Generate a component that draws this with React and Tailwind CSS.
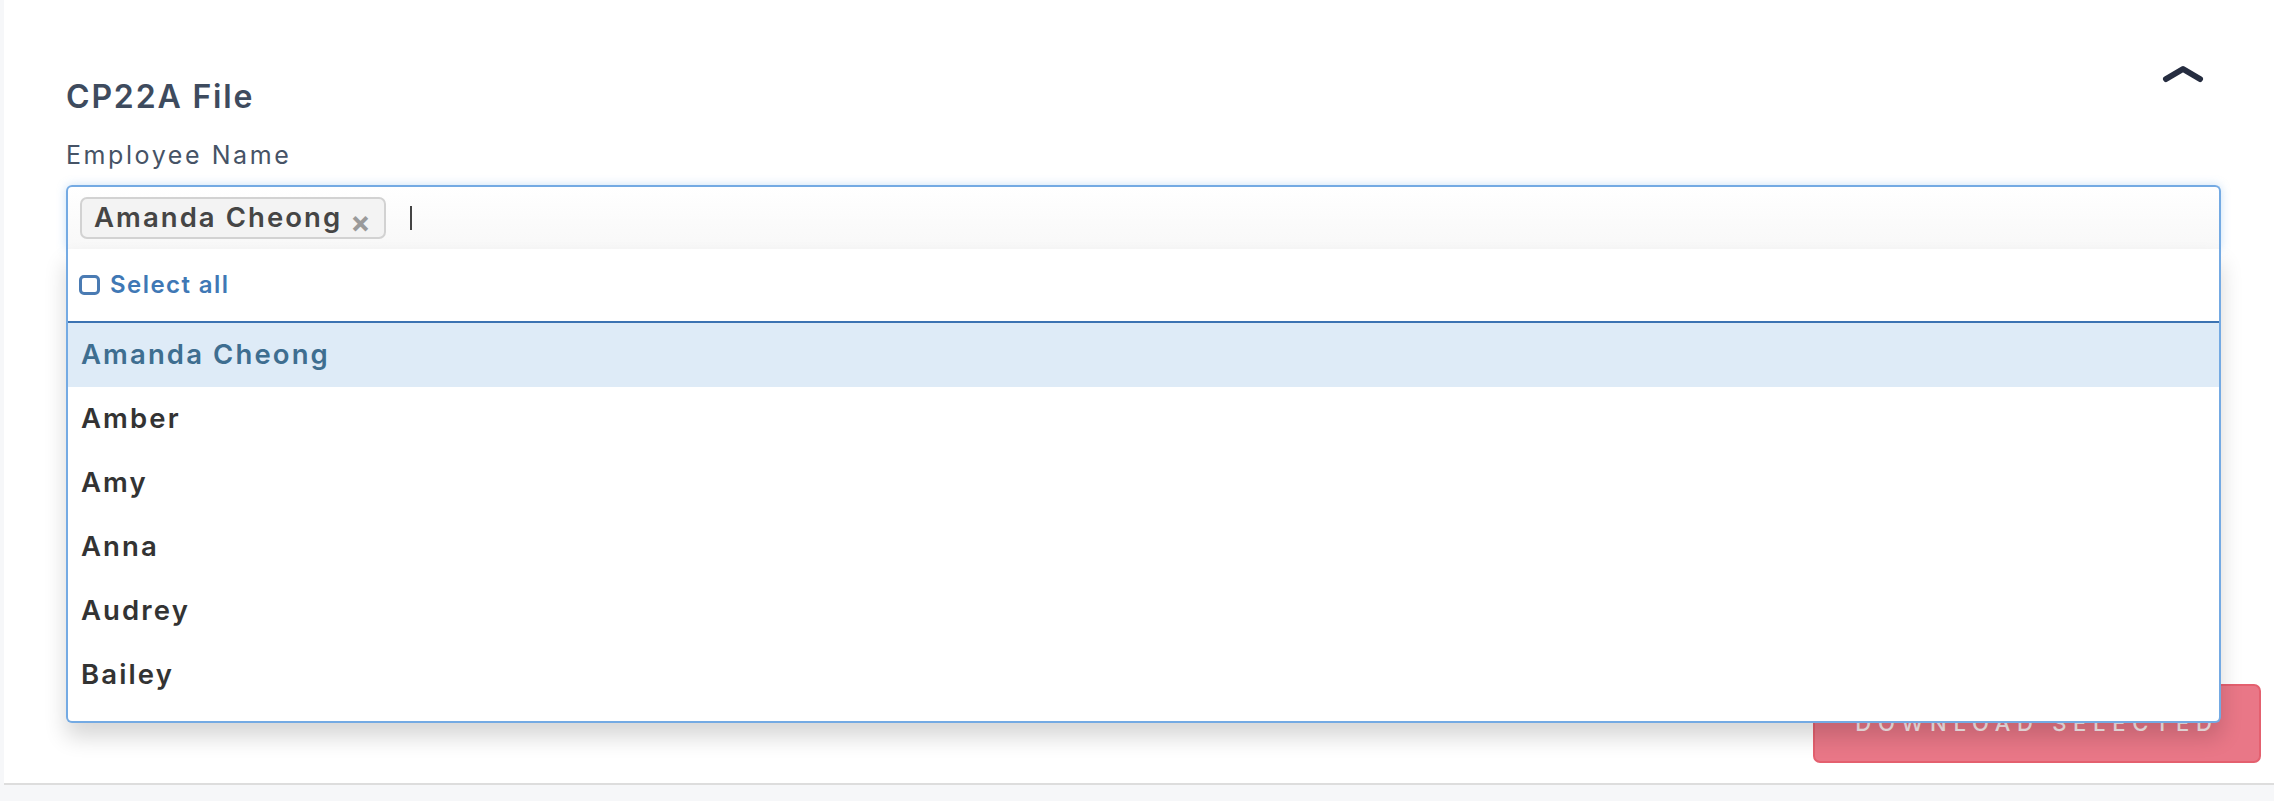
import { useState } from "react";

const employees = ["Amanda Cheong", "Amber", "Amy", "Anna", "Audrey", "Bailey"];

export default function App() {
  const [selected] = useState(["Amanda Cheong"]);

  return (
    <div className="min-h-screen bg-[#f6f7f9] pl-[4px] font-['Inter',sans-serif]">
      <div className="bg-white border-b-2 border-[#dddddd] pb-[20px]">
        {/* Header */}
        <div className="pl-[62px] pr-[53px] pt-[60px]">
          <div className="flex justify-between items-start">
            <h2 className="mt-[18px] text-[32px] leading-[38px] font-semibold text-[#3e4b5e] tracking-[0.057em]">
              CP22A File
            </h2>
            <button className="mt-[2px] mr-[15px] text-[#262d40]">
              <svg width="46" height="24" viewBox="0 0 46 24" fill="none">
                <polyline
                  points="6,17 23,7 40,17"
                  stroke="currentColor"
                  strokeWidth="6"
                  strokeLinecap="round"
                  strokeLinejoin="round"
                />
              </svg>
            </button>
          </div>

          <label className="block mt-[23.5px] text-[25px] leading-[30px] text-[#465366] tracking-[0.103em]">
            Employee Name
          </label>

          {/* Multi select */}
          <div className="relative mt-[15.5px]">
            <div className="h-[64px] border-2 border-b-0 border-[#74aae3] rounded-t-[6px] bg-gradient-to-b from-white to-[#f8f8f8] shadow-[0_0_10px_rgba(102,170,233,0.35)] flex items-center pl-[12px] gap-[24px]">
              {selected.map((name) => (
                <span
                  key={name}
                  className="h-[42px] flex items-center gap-[8px] pl-[12px] pr-[13px] bg-[#f3f3f3] border-2 border-[#d2d2d2] rounded-[7px] text-[27.5px] font-semibold text-[#454545] tracking-[0.075em]"
                >
                  {name}
                  <span className="mt-[8px] text-[30px] leading-none font-bold text-[#9a9a9a] tracking-normal">×</span>
                </span>
              ))}
              <span className="w-[2px] h-[24px] bg-[#444]" />
            </div>

            <div className="absolute top-full left-0 right-0 z-10 bg-white border-2 border-t-0 border-[#74aae3] rounded-b-[6px] shadow-[0_14px_22px_rgba(0,0,0,0.16)] pb-[14px]">
              <div className="h-[74px] flex items-center gap-[10px] pl-[11px] border-b-2 border-[#3c73b2]">
                <span className="w-[21px] h-[20px] border-[3px] border-[#4a7bb3] rounded-[5px]" />
                <span className="text-[24px] font-semibold text-[#3f78b5] tracking-[0.06em]">Select all</span>
              </div>
              {employees.map((name, i) => (
                <div
                  key={name}
                  className={
                    i === 0
                      ? "h-[64px] flex items-center pl-[13px] bg-[#deebf7] text-[#3e6e90] text-[27.5px] font-semibold tracking-[0.077em]"
                      : "h-[64px] flex items-center pl-[13px] text-[#333333] text-[27.5px] font-semibold tracking-[0.077em]"
                  }
                >
                  {name}
                </div>
              ))}
            </div>
          </div>
        </div>

        {/* Actions */}
        <div className="flex justify-end pr-[13px] mt-[435px]">
          <button className="w-[448px] h-[79px] rounded-[7px] bg-[#e97787] border-2 border-[#e4606f] text-[#fbecee] text-[22px] font-medium tracking-[0.305em]">
            DOWNLOAD SELECTED
          </button>
        </div>
      </div>
    </div>
  );
}
